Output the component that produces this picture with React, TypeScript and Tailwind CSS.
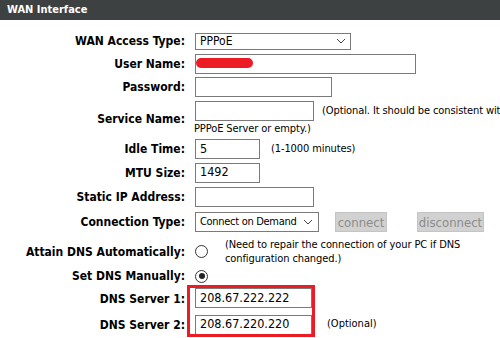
import React from "react";

const font = { fontFamily: '"DejaVu Sans Condensed", "DejaVu Sans", sans-serif' };

const Chevron = () => (
  <svg width="10" height="6" viewBox="0 0 10 6" className="text-[#444] shrink-0">
    <path d="M1 1 L5 5 L9 1" fill="none" stroke="currentColor" strokeWidth="1" />
  </svg>
);

const Label: React.FC<{ children: React.ReactNode }> = ({ children }) => (
  <div className="w-[185px] shrink-0 text-right font-bold text-[12px] text-black whitespace-nowrap">{children}</div>
);

const Field: React.FC<{ w: string; value?: string; className?: string }> = ({ w, value, className }) => (
  <div className={`${w} h-[20px] border border-[#7a7a7a] bg-white flex items-center px-[4px] text-[12.5px] text-black ${className ?? ""}`}>
    {value}
  </div>
);

const Radio: React.FC<{ checked?: boolean }> = ({ checked }) => (
  <div className="w-[13px] h-[13px] rounded-full border border-[#333] bg-white flex items-center justify-center">
    {checked && <div className="w-[6px] h-[6px] rounded-full bg-[#222]" />}
  </div>
);

export default function App() {
  return (
    <div className="w-[500px] h-[338px] overflow-hidden bg-white" style={font}>
      <div className="h-[20px] bg-[#3e4142] flex items-center pl-[7px]">
        <span className="text-white font-bold text-[11px]">WAN Interface</span>
      </div>

      <div className="pt-[10px] flex flex-col">
        <div className="h-[22px] flex items-center">
          <Label>WAN Access Type:</Label>
          <div className="ml-[10px] w-[156px] h-[17px] border border-[#7a7a7a] flex items-center justify-between pl-[4px] pr-[4px] text-[12px]">
            <span>PPPoE</span>
            <Chevron />
          </div>
        </div>

        <div className="h-[23px] flex items-center">
          <Label>User Name:</Label>
          <div className="ml-[10px] relative">
            <Field w="w-[221px]" />
            <div className="absolute left-[1px] top-[4px] w-[57px] h-[10px] rounded-full bg-[#ed1c24]" />
          </div>
        </div>

        <div className="h-[24px] flex items-center">
          <Label>Password:</Label>
          <Field w="w-[137px]" className="ml-[10px]" />
        </div>

        <div className="h-[39px] flex items-center">
          <Label>Service Name:</Label>
          <div className="ml-[9px] flex flex-col">
            <div className="flex items-center">
              <Field w="w-[119px]" className="ml-[1px]" />
              <span className="ml-[8px] text-[11px] tracking-[-0.1px] whitespace-nowrap">(Optional. It should be consistent with</span>
            </div>
            <span className="text-[11px] tracking-[-0.1px] leading-[15px] whitespace-nowrap">PPPoE Server or empty.)</span>
          </div>
        </div>

        <div className="h-[22px] flex items-center">
          <Label>Idle Time:</Label>
          <Field w="w-[65px]" value="5" className="ml-[10px]" />
          <span className="ml-[11px] text-[11px] tracking-[-0.1px]">(1-1000 minutes)</span>
        </div>

        <div className="h-[25px] flex items-center">
          <Label>MTU Size:</Label>
          <Field w="w-[65px]" value="1492" className="ml-[10px]" />
        </div>

        <div className="h-[24px] flex items-center">
          <Label>Static IP Address:</Label>
          <Field w="w-[119px]" className="ml-[10px]" />
        </div>

        <div className="h-[26px] flex items-center">
          <Label>Connection Type:</Label>
          <div className="ml-[10px] w-[124px] h-[20px] border border-[#7a7a7a] flex items-center justify-between pl-[4px] pr-[5px] text-[11px] tracking-[-0.3px] whitespace-nowrap overflow-hidden">
            <span>Connect on Demand</span>
            <Chevron />
          </div>
          <button className="ml-[16px] w-[52px] h-[20px] bg-[#d1d1d1] border border-[#c4c4c4] text-[#8c8c8c] text-[13px] leading-none">connect</button>
          <button className="ml-[30px] w-[67px] h-[20px] bg-[#d1d1d1] border border-[#c4c4c4] text-[#8c8c8c] text-[13px] leading-none">disconnect</button>
        </div>

        <div className="h-[33px] flex items-center">
          <Label>Attain DNS Automatically:</Label>
          <div className="ml-[10px]">
            <Radio />
          </div>
          <div className="ml-[17px] text-[11px] tracking-[-0.1px] leading-[14px]">
            (Need to repair the connection of your PC if DNS
            <br />
            configuration changed.)
          </div>
        </div>

        <div className="h-[16px] flex items-center">
          <Label>Set DNS Manually:</Label>
          <div className="ml-[10px]">
            <Radio checked />
          </div>
        </div>

        <div className="relative">
          <div className="h-[27px] flex items-end pb-[3px]">
            <Label>DNS Server 1:</Label>
            <Field w="w-[117px]" value="208.67.222.222" className="ml-[10px] h-[18px]" />
          </div>
          <div className="h-[27px] flex items-center">
            <Label>DNS Server 2:</Label>
            <Field w="w-[117px]" value="208.67.220.220" className="ml-[10px] h-[18px]" />
            <span className="ml-[15px] text-[11px]">(Optional)</span>
          </div>
          <div className="absolute left-[187px] top-[1px] w-[128px] h-[52px] border-[3px] border-[#ed1c24]" />
        </div>
      </div>
    </div>
  );
}
